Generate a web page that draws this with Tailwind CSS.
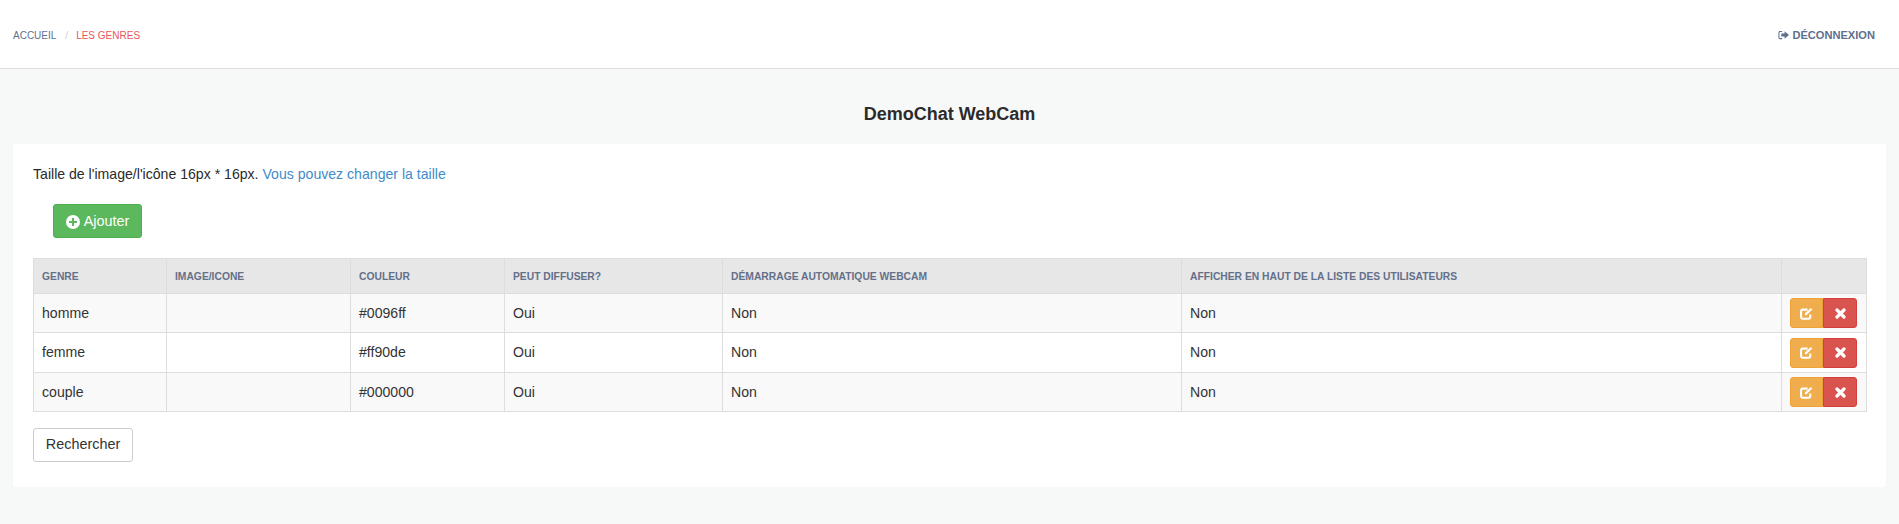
<!DOCTYPE html>
<html lang="fr"><head><meta charset="utf-8"><title>Les genres</title>
<script src="https://cdn.jsdelivr.net/npm/@tailwindcss/browser@4"></script></head>
<body class="bg-[#f7f9f9] font-['Liberation_Sans',Arial,sans-serif] text-[14.1px] text-[#333]">
<header class="h-[69px] bg-white border-b border-[#dedede] flex items-center justify-between pt-[2px] pl-[13px] pr-[24px]">
  <nav class="flex items-center text-[10px] uppercase text-[#5f6f8f]"><a>Accueil</a><span class="ml-[9px] mr-[8px] text-[#ccc]">/</span><span class="text-[#e8595b]">Les genres</span></nav>
  <a class="flex items-center gap-[3px] text-[11.1px] font-bold uppercase text-[#5f6f8f]">
    <svg class="w-[11px] h-[10px]" viewBox="0 0 12 10" fill="currentColor"><path d="M4.5 0.5H2.2C1 0.5.5 1.2.5 2.2v5.6c0 1 .5 1.7 1.7 1.7h2.3V8.4H2.4c-.5 0-.8-.3-.8-.8V2.4c0-.5.3-.8.8-.8h2.1z"/><path d="M7.2 1L12 5 7.2 9V6.7H3.6V3.3h3.6z"/></svg>Déconnexion</a>
</header>
<main class="px-[13px]">
  <h1 class="h-[75px] pt-[15px] flex items-center justify-center text-[18px] font-bold text-[#2b2b2b]">DemoChat WebCam</h1>
  <section class="bg-white h-[343px] px-[20px] pt-[22px] shadow-[0_1px_2px_rgba(0,0,0,0.03)] rounded-[2px]">
    <p class="leading-[16px] text-[#2a2a2a]">Taille de l'image/l'icône 16px * 16px. <a class="text-[#428bca]">Vous pouvez changer la taille</a></p>
    <button class="mt-[22px] ml-[20px] h-[34px] w-[89px] flex items-center justify-center gap-[4px] pt-[1px] rounded-[3px] bg-[#5cb85c] border border-[#4cae4c] text-[14.4px] text-white">
      <svg class="w-[14px] h-[14px]" viewBox="0 0 14 14"><circle cx="7" cy="7" r="7" fill="#fff"/><path d="M6 3h2v3h3v2H8v3H6V8H3V6h3z" fill="#5cb85c"/></svg>Ajouter</button>
    <table class="mt-[20px] w-[1833px] table-fixed border-collapse border border-[#dddddd]">
      <colgroup><col class="w-[133px]"><col class="w-[184px]"><col class="w-[154px]"><col class="w-[218px]"><col class="w-[459px]"><col class="w-[600px]"><col class="w-[85px]"></colgroup>
      <thead class="bg-[#e7e7e7] text-[10.3px] uppercase text-left text-[#64708a]">
        <tr class="h-[35px]"><th class="border border-[#dddddd] px-[8px] pt-[2px]">Genre</th><th class="border border-[#dddddd] px-[8px] pt-[2px]">Image/Icone</th><th class="border border-[#dddddd] px-[8px] pt-[2px]">Couleur</th><th class="border border-[#dddddd] px-[8px] pt-[2px]">Peut diffuser?</th><th class="border border-[#dddddd] px-[8px] pt-[2px]">Démarrage automatique WebCam</th><th class="border border-[#dddddd] px-[8px] pt-[2px]">Afficher en haut de la liste des utilisateurs</th><th class="border border-[#dddddd]"></th></tr>
      </thead>
      <tbody class="[&_td:not(:last-child)]:pt-[1px]">
        <tr class="h-[39px] bg-[#f9f9f9]"><td class="border border-[#dddddd] px-[8px]">homme</td><td class="border border-[#dddddd] px-[8px]"></td><td class="border border-[#dddddd] px-[8px]">#0096ff</td><td class="border border-[#dddddd] px-[8px]">Oui</td><td class="border border-[#dddddd] px-[8px]">Non</td><td class="border border-[#dddddd] px-[8px]">Non</td>
          <td class="border border-[#dddddd] px-[8px]"><div class="flex w-[67px] h-[30px]"><button class="w-[33px] flex items-center justify-center bg-[#f0ad4e] border border-[#eea236] rounded-l-[3px]"><svg class="w-[13px] h-[13px]" viewBox="0 0 12 12" fill="none" stroke="#fff" stroke-width="1.9"><path d="M9.5 7v2.200c0 1-.6 1.600-1.600 1.600H2.600C1.600 10.800 1 10.200 1 9.200V4c0-1 .6-1.600 1.600-1.600H7"/><path d="M4.500 7.500V6l5.500-5 1.300 1.400L6 7.500z" fill="#fff" stroke="none"/></svg></button><button class="w-[34px] flex items-center justify-center bg-[#d9534f] border border-[#d43f3a] rounded-r-[3px]"><svg class="w-[11px] h-[11px]" viewBox="0 0 11 11" stroke="#fff" stroke-width="3.2" stroke-linecap="round"><path d="M2 2l7 7M9 2l-7 7"/></svg></button></div></td></tr>
        <tr class="h-[40px] bg-white"><td class="border border-[#dddddd] px-[8px]">femme</td><td class="border border-[#dddddd] px-[8px]"></td><td class="border border-[#dddddd] px-[8px]">#ff90de</td><td class="border border-[#dddddd] px-[8px]">Oui</td><td class="border border-[#dddddd] px-[8px]">Non</td><td class="border border-[#dddddd] px-[8px]">Non</td>
          <td class="border border-[#dddddd] px-[8px]"><div class="flex w-[67px] h-[30px]"><button class="w-[33px] flex items-center justify-center bg-[#f0ad4e] border border-[#eea236] rounded-l-[3px]"><svg class="w-[13px] h-[13px]" viewBox="0 0 12 12" fill="none" stroke="#fff" stroke-width="1.9"><path d="M9.5 7v2.200c0 1-.6 1.600-1.600 1.600H2.600C1.600 10.800 1 10.200 1 9.200V4c0-1 .6-1.600 1.600-1.600H7"/><path d="M4.500 7.500V6l5.500-5 1.300 1.400L6 7.500z" fill="#fff" stroke="none"/></svg></button><button class="w-[34px] flex items-center justify-center bg-[#d9534f] border border-[#d43f3a] rounded-r-[3px]"><svg class="w-[11px] h-[11px]" viewBox="0 0 11 11" stroke="#fff" stroke-width="3.2" stroke-linecap="round"><path d="M2 2l7 7M9 2l-7 7"/></svg></button></div></td></tr>
        <tr class="h-[39px] bg-[#f9f9f9]"><td class="border border-[#dddddd] px-[8px]">couple</td><td class="border border-[#dddddd] px-[8px]"></td><td class="border border-[#dddddd] px-[8px]">#000000</td><td class="border border-[#dddddd] px-[8px]">Oui</td><td class="border border-[#dddddd] px-[8px]">Non</td><td class="border border-[#dddddd] px-[8px]">Non</td>
          <td class="border border-[#dddddd] px-[8px]"><div class="flex w-[67px] h-[30px]"><button class="w-[33px] flex items-center justify-center bg-[#f0ad4e] border border-[#eea236] rounded-l-[3px]"><svg class="w-[13px] h-[13px]" viewBox="0 0 12 12" fill="none" stroke="#fff" stroke-width="1.9"><path d="M9.5 7v2.200c0 1-.6 1.600-1.600 1.600H2.600C1.600 10.800 1 10.200 1 9.200V4c0-1 .6-1.600 1.600-1.600H7"/><path d="M4.500 7.500V6l5.500-5 1.300 1.400L6 7.500z" fill="#fff" stroke="none"/></svg></button><button class="w-[34px] flex items-center justify-center bg-[#d9534f] border border-[#d43f3a] rounded-r-[3px]"><svg class="w-[11px] h-[11px]" viewBox="0 0 11 11" stroke="#fff" stroke-width="3.2" stroke-linecap="round"><path d="M2 2l7 7M9 2l-7 7"/></svg></button></div></td></tr>
      </tbody>
    </table>
    <button class="mt-[16px] h-[34px] w-[100px] rounded-[3px] bg-white border border-[#ccc] text-[14.4px] text-[#333]">Rechercher</button>
  </section>
</main>
</body></html>
